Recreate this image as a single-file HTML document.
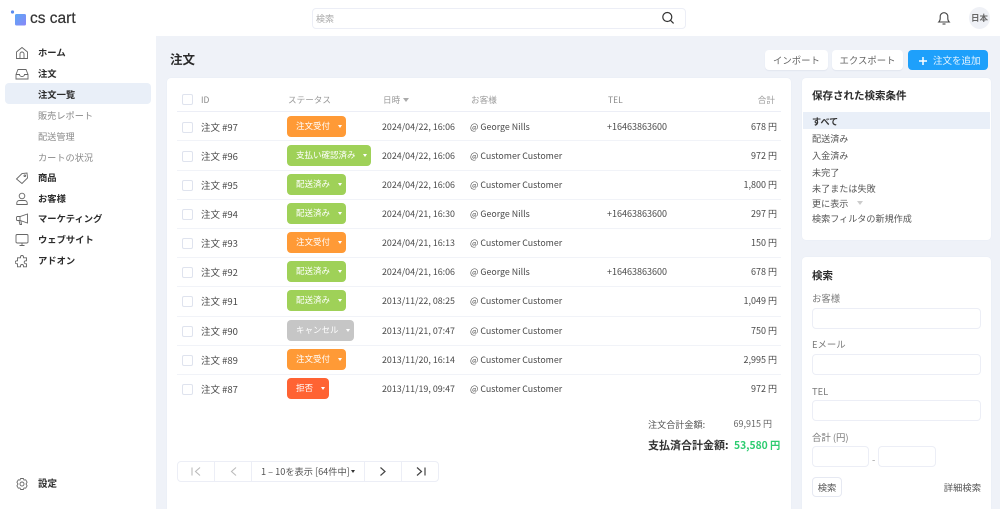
<!DOCTYPE html>
<html lang="ja"><head><meta charset="utf-8"><title>注文</title>
<style>
html,body{margin:0;padding:0}
body{width:1000px;height:509px;overflow:hidden;position:relative;background:#eff2f8;font-family:"Noto Sans CJK JP","Liberation Sans",sans-serif;font-size:9.5px;color:#4a4a4a}
.a{position:absolute;white-space:nowrap}
.b{position:absolute;background:#fff}
.nav{position:absolute;left:38px;font-size:9.3px;font-weight:700;color:#2b2b2b;line-height:14px;white-space:nowrap}
.sub{position:absolute;left:38px;font-size:9.2px;color:#8a8a8a;line-height:14px;white-space:nowrap}
.ic{position:absolute;left:15px;width:14px;height:14px;fill:none;stroke:#666;stroke-width:.9}
.cb{position:absolute;left:182px;width:9px;height:9px;border:1px solid #dfe3ee;border-radius:2px;background:#fff}
.ln{position:absolute;left:177px;width:604px;height:1px;background:#f1f3f8}
.id,.dt,.cu,.te,.am{position:absolute;white-space:nowrap;line-height:14px;font-size:9px;color:#4a4a4a}
.id{left:201px;font-size:9.5px}.dt{left:382px;font-size:8.9px}.cu{left:470px;font-size:8.85px}.te{left:607px}.am{right:223px}
.st{position:absolute;left:287px;height:21px;border-radius:4px;color:#fff;font-size:8.5px;line-height:21px;padding-left:9px;box-sizing:border-box;white-space:nowrap}
.st i{position:absolute;right:4px;top:9px;width:0;height:0;border:2.5px solid transparent;border-top:3px solid #fff;border-bottom:0}
.or{background:#ff9a36}.gr{background:#9fd158}.gy{background:#c6c6c6}.rd{background:#ff6333}
.hd{position:absolute;top:93px;line-height:14px;color:#9a9a9a;font-size:8.6px;white-space:nowrap}
.btn{position:absolute;top:50px;height:20px;background:#fff;border-radius:4px;box-shadow:0 1px 1px #e1e5ef;text-align:center;line-height:20px;color:#666;font-size:9.4px}
.inp{position:absolute;background:#fff;border:1px solid #eceef6;border-radius:4px;box-sizing:border-box;height:21px}
.lab{position:absolute;left:812px;line-height:14px;color:#7a7a7a;font-size:9.4px;white-space:nowrap}
.sv{position:absolute;left:812px;line-height:14px;color:#555;font-size:9.1px;white-space:nowrap}
.pg{position:absolute;top:461px;height:21px;border:1px solid #eceef6;box-sizing:border-box;background:#fff}
</style></head><body>

<div class="b" style="left:0;top:0;width:1000px;height:36px"></div>
<div class="b" style="left:0;top:36px;width:156px;height:473px"></div>

<svg class="a" style="left:10px;top:9px" width="18" height="18" viewBox="0 0 18 18"><defs><linearGradient id="g" x1="0" y1="0" x2="1" y2="1"><stop offset="0" stop-color="#5aa8f5"/><stop offset="1" stop-color="#8a86f8"/></linearGradient></defs><circle cx="2.5" cy="3" r="1.6" fill="#5a8cf0"/><rect x="5" y="5" width="11" height="11.5" rx="1.5" fill="url(#g)"/></svg>
<div class="a" style="left:30px;top:9px;font-family:'Liberation Sans',sans-serif;font-size:15.5px;line-height:20px;color:#333;-webkit-text-stroke:.2px #333">cs cart</div>

<div class="inp" style="left:312px;top:8px;width:374px;height:21px"></div>
<div class="a" style="left:316px;top:12px;font-size:9px;line-height:14px;color:#aaa">検索</div>
<svg class="a" style="left:661px;top:11px" width="14" height="14" viewBox="0 0 14 14" fill="none" stroke="#333" stroke-width="1.2"><circle cx="6.3" cy="6" r="4.5"/><path d="M9.6 9.4l3 3"/></svg>

<svg class="a" style="left:936px;top:10px" width="16" height="16" viewBox="0 0 16 16" fill="none" stroke="#444" stroke-width="1.1"><path d="M2.8 12h10.4c-1-1-1.4-2-1.4-3.5V6.5a3.8 3.8 0 0 0-7.6 0v2c0 1.5-.4 2.5-1.4 3.5z"/><path d="M6.5 14h3"/></svg>
<div class="a" style="left:969px;top:7px;width:21px;height:22px;border-radius:50%;background:#eff1f6;text-align:center;line-height:22px;font-size:8.5px;font-weight:700;color:#666">日本</div>

<svg class="ic" style="top:46px" viewBox="0 0 14 14"><path d="M1.5 6L7 1.5 12.5 6v6.5h-11z"/><path d="M5 12.5V8a2 2 0 0 1 4 0v4.5"/></svg>
<div class="nav" style="top:45px">ホーム</div>
<svg class="ic" style="top:67px" viewBox="0 0 14 14"><path d="M1 7.5L3 2.5h8l2 5v4.5H1z"/><path d="M1 7.5h3.5a2.5 2 0 0 0 5 0H13"/></svg>
<div class="nav" style="top:66px">注文</div>
<div class="a" style="left:5px;top:83px;width:146px;height:21px;background:#e9eff8;border-radius:4px"></div>
<div class="nav" style="top:87px">注文一覧</div>
<div class="sub" style="top:108px">販売レポート</div>
<div class="sub" style="top:129px">配送管理</div>
<div class="sub" style="top:150px">カートの状況</div>
<svg class="ic" style="top:171px" viewBox="0 0 14 14"><path d="M1.5 8L7 2.5l5-.5.5 5-5.5 5.5z"/><circle cx="9.8" cy="4.7" r=".8"/></svg>
<div class="nav" style="top:170px">商品</div>
<svg class="ic" style="top:192px" viewBox="0 0 14 14"><circle cx="7" cy="4" r="2.8"/><path d="M1.8 12.5v-1.5a2.5 2.5 0 0 1 2.5-2.500h5.400a2.500 2.500 0 0 1 2.500 2.500v1.500z"/></svg>
<div class="nav" style="top:191px">お客様</div>
<svg class="ic" style="top:212px" viewBox="0 0 14 14"><path d="M12.5 2L5 4.5H2.5a1 1 0 0 0-1 1v2a1 1 0 0 0 1 1H5l7.5 2.5z"/><path d="M5 4.5v4M4 8.5l1 4h1.5l-.6-3.5"/></svg>
<div class="nav" style="top:211px">マーケティング</div>
<svg class="ic" style="top:233px" viewBox="0 0 14 14"><rect x="1" y="1.5" width="12" height="8.5" rx="1.2"/><path d="M7 10v2.500M4.500 12.500h5"/></svg>
<div class="nav" style="top:232px">ウェブサイト</div>
<svg class="ic" style="top:254px" viewBox="0 0 14 14"><path d="M5.5 3a1.5 1.5 0 0 1 3 0v.8h3v3h-.8a1.5 1.5 0 0 0 0 3h.8v3h-3v-.8a1.5 1.5 0 0 0-3 0v.8h-3v-3h-.8a1.5 1.5 0 0 1 0-3h.8v-3h3z"/></svg>
<div class="nav" style="top:253px">アドオン</div>
<svg class="ic" style="top:477px" viewBox="0 0 14 14"><circle cx="7" cy="7" r="2"/><path d="M5.6 1.500H8.400L9 3.100 10.700 2.800 12.100 5.200 11 7 12.100 8.800 10.700 11.200 9 10.900 8.400 12.500H5.600L5 10.900 3.300 11.200 1.900 8.800 3 7 1.900 5.200 3.300 2.800 5 3.100Z" stroke-linejoin="round"/></svg>
<div class="nav" style="top:476px;font-size:9.5px">設定</div>

<div class="a" style="left:170px;top:49px;font-size:12.5px;line-height:20px;font-weight:700;color:#2b2b2b">注文</div>
<div class="btn" style="left:765px;width:63px">インポート</div>
<div class="btn" style="left:832px;width:71px">エクスポート</div>
<div class="a" style="left:908px;top:50px;width:80px;height:20px;background:#1ea0fb;border-radius:4px;color:#fff;font-size:9.5px;line-height:20px"><svg style="position:absolute;left:10px;top:5.5px" width="10" height="10" viewBox="0 0 10 10" fill="none" stroke="#fff" stroke-width="1.5"><path d="M5 1v8M1 5h8"/></svg><span style="position:absolute;left:25px;white-space:nowrap;color:#e6f4ff">注文を追加</span></div>

<div class="b" style="left:167px;top:78px;width:624px;height:431px;border-radius:4px 4px 0 0;box-shadow:0 0 1px #dfe4ef"></div>

<div class="cb" style="top:94px"></div>
<div class="hd" style="left:201px;font-size:8.5px;color:#888">ID</div>
<div class="hd" style="left:288px">ステータス</div>
<div class="hd" style="left:383px">日時</div>
<div class="a" style="left:403px;top:98px;width:0;height:0;border:3.5px solid transparent;border-top:4px solid #aaa;border-bottom:0"></div>
<div class="hd" style="left:471px">お客様</div>
<div class="hd" style="left:608px;font-size:8.5px;color:#888">TEL</div>
<div class="hd" style="right:225px">合計</div>
<div class="ln" style="top:111px;background:#eceef6"></div>

<div class="cb" style="top:122px"></div><div class="id" style="top:120px">注文 #97</div><div class="st or" style="top:116px;width:59px">注文受付<i></i></div><div class="dt" style="top:120px">2024/04/22, 16:06</div><div class="cu" style="top:120px">@ George Nills</div><div class="te" style="top:120px">+16463863600</div><div class="am" style="top:120px">678 円</div><div class="ln" style="top:140px"></div>

<div class="cb" style="top:151px"></div><div class="id" style="top:149px">注文 #96</div><div class="st gr" style="top:145px;width:84px">支払い確認済み<i></i></div><div class="dt" style="top:149px">2024/04/22, 16:06</div><div class="cu" style="top:149px">@ Customer Customer</div><div class="am" style="top:149px">972 円</div><div class="ln" style="top:170px"></div>

<div class="cb" style="top:180px"></div><div class="id" style="top:178px">注文 #95</div><div class="st gr" style="top:174px;width:59px">配送済み<i></i></div><div class="dt" style="top:178px">2024/04/22, 16:06</div><div class="cu" style="top:178px">@ Customer Customer</div><div class="am" style="top:178px">1,800 円</div><div class="ln" style="top:199px"></div>

<div class="cb" style="top:209px"></div><div class="id" style="top:207px">注文 #94</div><div class="st gr" style="top:203px;width:59px">配送済み<i></i></div><div class="dt" style="top:207px">2024/04/21, 16:30</div><div class="cu" style="top:207px">@ George Nills</div><div class="te" style="top:207px">+16463863600</div><div class="am" style="top:207px">297 円</div><div class="ln" style="top:228px"></div>

<div class="cb" style="top:238px"></div><div class="id" style="top:236px">注文 #93</div><div class="st or" style="top:232px;width:59px">注文受付<i></i></div><div class="dt" style="top:236px">2024/04/21, 16:13</div><div class="cu" style="top:236px">@ Customer Customer</div><div class="am" style="top:236px">150 円</div><div class="ln" style="top:257px"></div>

<div class="cb" style="top:267px"></div><div class="id" style="top:265px">注文 #92</div><div class="st gr" style="top:261px;width:59px">配送済み<i></i></div><div class="dt" style="top:265px">2024/04/21, 16:06</div><div class="cu" style="top:265px">@ George Nills</div><div class="te" style="top:265px">+16463863600</div><div class="am" style="top:265px">678 円</div><div class="ln" style="top:286px"></div>

<div class="cb" style="top:296px"></div><div class="id" style="top:294px">注文 #91</div><div class="st gr" style="top:290px;width:59px">配送済み<i></i></div><div class="dt" style="top:294px">2013/11/22, 08:25</div><div class="cu" style="top:294px">@ Customer Customer</div><div class="am" style="top:294px">1,049 円</div><div class="ln" style="top:316px"></div>

<div class="cb" style="top:326px"></div><div class="id" style="top:324px">注文 #90</div><div class="st gy" style="top:320px;width:67px">キャンセル<i></i></div><div class="dt" style="top:324px">2013/11/21, 07:47</div><div class="cu" style="top:324px">@ Customer Customer</div><div class="am" style="top:324px">750 円</div><div class="ln" style="top:345px"></div>

<div class="cb" style="top:355px"></div><div class="id" style="top:353px">注文 #89</div><div class="st or" style="top:349px;width:59px">注文受付<i></i></div><div class="dt" style="top:353px">2013/11/20, 16:14</div><div class="cu" style="top:353px">@ Customer Customer</div><div class="am" style="top:353px">2,995 円</div><div class="ln" style="top:374px"></div>

<div class="cb" style="top:384px"></div><div class="id" style="top:382px">注文 #87</div><div class="st rd" style="top:378px;width:42px">拒否<i></i></div><div class="dt" style="top:382px">2013/11/19, 09:47</div><div class="cu" style="top:382px">@ Customer Customer</div><div class="am" style="top:382px">972 円</div>

<div class="a" style="left:648px;top:417px;line-height:14px;color:#555;font-size:9.1px">注文合計金額:</div>
<div class="a" style="right:228px;top:417px;line-height:14px;color:#666;font-size:9px">69,915 円</div>
<div class="a" style="left:648px;top:438px;line-height:14px;font-size:11px;font-weight:700;color:#333">支払済合計金額:</div>
<div class="a" style="left:734px;top:438px;line-height:14px;font-size:10.3px;font-weight:700;color:#2ecc71">53,580 円</div>

<div class="pg" style="left:177px;width:38px;border-radius:4px 0 0 4px"></div>
<div class="pg" style="left:214px;width:38px"></div>
<div class="pg" style="left:251px;width:114px"></div>
<div class="a" style="left:261px;top:464px;line-height:14px;color:#555;font-size:9.2px">1 – 10を表示 [64件中]</div>
<div class="a" style="left:351px;top:470px;width:0;height:0;border:2.5px solid transparent;border-top:3px solid #333;border-bottom:0"></div>
<div class="pg" style="left:364px;width:38px"></div>
<div class="pg" style="left:401px;width:38px;border-radius:0 4px 4px 0"></div>
<svg class="a" style="left:190px;top:466px" width="12" height="11" viewBox="0 0 12 11" fill="none" stroke="#bbb" stroke-width="1.1"><path d="M2 1.5v8M10 1.5L5.5 5.5 10 9.5"/></svg>
<svg class="a" style="left:228px;top:466px" width="12" height="11" viewBox="0 0 12 11" fill="none" stroke="#bbb" stroke-width="1.1"><path d="M8 1.5L3.5 5.5 8 9.5"/></svg>
<svg class="a" style="left:377px;top:466px" width="12" height="11" viewBox="0 0 12 11" fill="none" stroke="#444" stroke-width="1.2"><path d="M3.5 1.5L8 5.5 3.5 9.5"/></svg>
<svg class="a" style="left:415px;top:466px" width="12" height="11" viewBox="0 0 12 11" fill="none" stroke="#444" stroke-width="1.2"><path d="M2 1.5L6.5 5.5 2 9.5M10 1.5v8"/></svg>

<div class="b" style="left:802px;top:78px;width:189px;height:162px;border-radius:4px;box-shadow:0 0 1px #dfe4ef"></div>
<div class="a" style="left:812px;top:88px;font-size:10.5px;line-height:16px;font-weight:700;color:#2b2b2b">保存された検索条件</div>
<div class="a" style="left:803px;top:112px;width:187px;height:17px;background:#e9eff8"></div>
<div class="sv" style="top:114px;font-weight:700;color:#333">すべて</div>
<div class="sv" style="top:131px">配送済み</div>
<div class="sv" style="top:148px">入金済み</div>
<div class="sv" style="top:165px">未完了</div>
<div class="sv" style="top:181px">未了または失敗</div>
<div class="sv" style="top:196px">更に表示</div>
<div class="a" style="left:857px;top:201px;width:0;height:0;border:3.5px solid transparent;border-top:4px solid #ccc;border-bottom:0"></div>
<div class="sv" style="top:211px">検索フィルタの新規作成</div>

<div class="b" style="left:802px;top:257px;width:189px;height:252px;border-radius:4px 4px 0 0;box-shadow:0 0 1px #dfe4ef"></div>
<div class="a" style="left:812px;top:268px;font-size:10.5px;line-height:16px;font-weight:700;color:#2b2b2b">検索</div>
<div class="lab" style="top:291px">お客様</div>
<div class="inp" style="left:812px;top:308px;width:169px"></div>
<div class="lab" style="top:337px">Eメール</div>
<div class="inp" style="left:812px;top:354px;width:169px"></div>
<div class="lab" style="top:384px">TEL</div>
<div class="inp" style="left:812px;top:400px;width:169px"></div>
<div class="lab" style="top:430px">合計 (円)</div>
<div class="inp" style="left:812px;top:446px;width:57px"></div>
<div class="a" style="left:872px;top:452px;line-height:14px;color:#999">-</div>
<div class="inp" style="left:878px;top:446px;width:58px"></div>
<div class="a" style="left:812px;top:477px;width:30px;height:20px;background:#fff;border:1px solid #e6e9f2;border-radius:4px;box-sizing:border-box;text-align:center;line-height:18px;color:#555;font-size:9.3px">検索</div>
<div class="a" style="right:19px;top:480px;line-height:14px;color:#555;font-size:9.3px">詳細検索</div>
</body></html>
